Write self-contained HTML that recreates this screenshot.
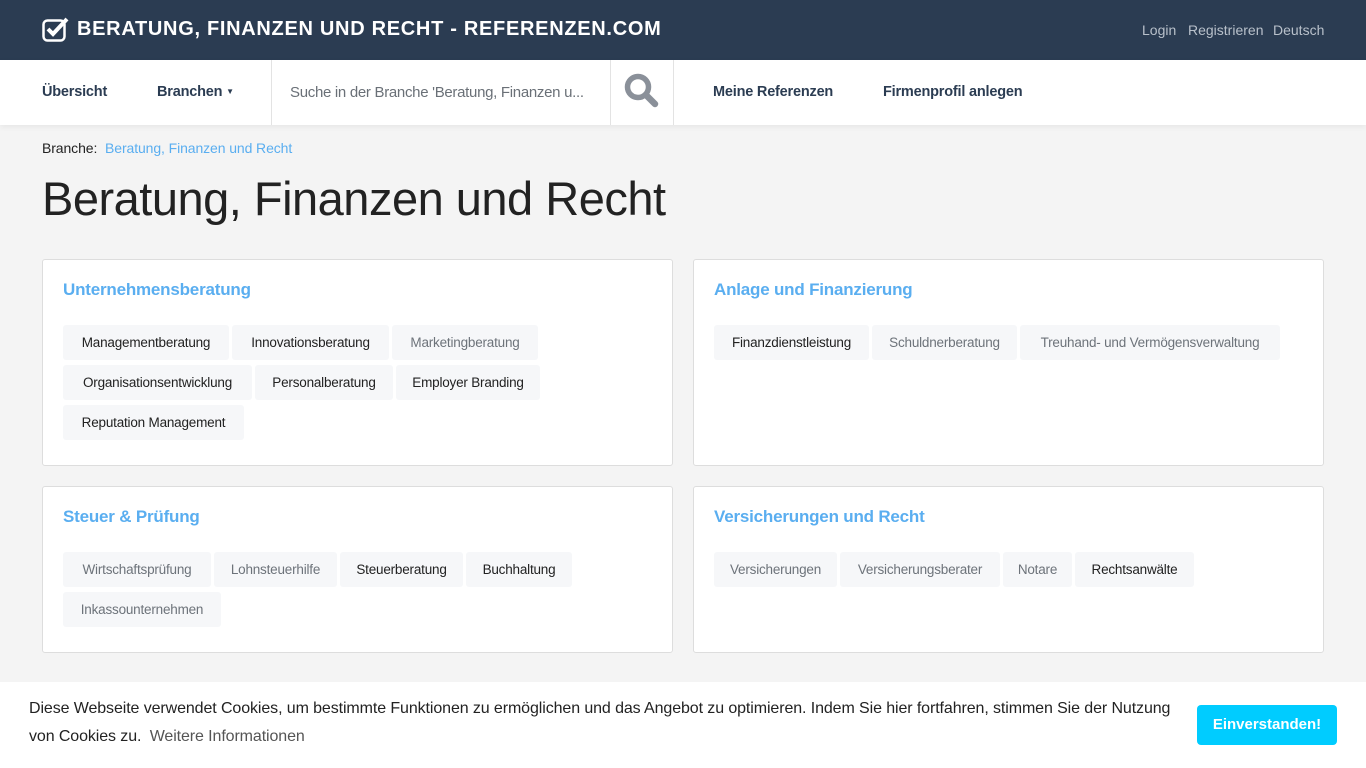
<!DOCTYPE html><html><head><meta charset="utf-8"><style>
*{box-sizing:border-box;margin:0;padding:0}
body{width:1366px;height:768px;overflow:hidden;background:#f4f4f4;font-family:"Liberation Sans",sans-serif;position:relative;color:#222}
.a{position:absolute}
.top{left:0;top:0;width:1366px;height:60px;background:#2b3c52}
.brand{left:77px;top:18px;color:#fff;font-weight:bold;font-size:20px;letter-spacing:0.7px;white-space:nowrap}
.tl{top:22px;font-size:14px;color:#b8c0ca}
.nav{left:0;top:60px;width:1366px;height:65px;background:#fff;box-shadow:0 2px 6px rgba(0,0,0,.06)}
.ni{top:84px;font-size:14.5px;font-weight:bold;color:#2b3c52;letter-spacing:-0.2px;white-space:nowrap}
.vl{top:60px;width:1px;height:65px;background:#e3e3e3}
.card{background:#fff;border:1px solid #ddd;border-radius:3px}
.ct{font-size:17px;font-weight:bold;color:#5aaef0;letter-spacing:-0.2px}
.tag{position:absolute;height:35px;line-height:35px;background:#f6f7f9;border-radius:3px;font-size:13.5px;color:#222;text-align:center;white-space:nowrap;overflow:hidden;letter-spacing:-0.2px}
.g{color:#6d737a}
</style></head><body>
<div class="a top"></div>
<svg class="a" style="left:42px;top:17px" width="28" height="25" viewBox="0 0 28 25"><rect x="1.5" y="3.5" width="21" height="20" rx="4" fill="none" stroke="#fff" stroke-width="2.5"/><path d="M6 12 L11 17 L25 2" fill="none" stroke="#fff" stroke-width="4"/></svg>
<div class="a brand">BERATUNG, FINANZEN UND RECHT - REFERENZEN.COM</div>
<div class="a tl" style="left:1142px">Login</div>
<div class="a tl" style="left:1188px">Registrieren</div>
<div class="a tl" style="left:1273px">Deutsch</div>
<div class="a nav"></div>
<div class="a ni" style="left:42px">Übersicht</div>
<div class="a ni" style="left:157px">Branchen <span style="font-size:8px;vertical-align:2px">▼</span></div>
<div class="a vl" style="left:271px"></div>
<div class="a" style="left:290px;top:84px;font-size:15px;color:#6a7077;letter-spacing:-0.3px;white-space:nowrap">Suche in der Branche 'Beratung, Finanzen u...</div>
<div class="a vl" style="left:610px"></div>
<svg class="a" style="left:624px;top:73px" width="36" height="36" viewBox="0 0 36 36"><circle cx="14" cy="14" r="10.5" fill="none" stroke="#8a9099" stroke-width="5.5"/><path d="M22 22 L31 31" stroke="#8a9099" stroke-width="6.5" stroke-linecap="round"/></svg>
<div class="a vl" style="left:673px"></div>
<div class="a ni" style="left:713px">Meine Referenzen</div>
<div class="a ni" style="left:883px">Firmenprofil anlegen</div>
<div class="a" style="left:42px;top:140px;font-size:14px;letter-spacing:-0.1px">Branche: <span style="color:#5aaef0;margin-left:4px">Beratung, Finanzen und Recht</span></div>
<div class="a" style="left:42px;top:171px;font-size:47px;color:#222;letter-spacing:-0.5px">Beratung, Finanzen und Recht</div>

<div class="a card" style="left:42px;top:259px;width:631px;height:207px"></div>
<div class="a ct" style="left:63px;top:280px">Unternehmensberatung</div>
<div class="tag" style="left:63px;top:325px;width:166px">Managementberatung</div>
<div class="tag" style="left:232px;top:325px;width:157px">Innovationsberatung</div>
<div class="tag g" style="left:392px;top:325px;width:146px">Marketingberatung</div>
<div class="tag" style="left:63px;top:365px;width:189px">Organisationsentwicklung</div>
<div class="tag" style="left:255px;top:365px;width:138px">Personalberatung</div>
<div class="tag" style="left:396px;top:365px;width:144px">Employer Branding</div>
<div class="tag" style="left:63px;top:405px;width:181px">Reputation Management</div>

<div class="a card" style="left:693px;top:259px;width:631px;height:207px"></div>
<div class="a ct" style="left:714px;top:280px">Anlage und Finanzierung</div>
<div class="tag" style="left:714px;top:325px;width:155px">Finanzdienstleistung</div>
<div class="tag g" style="left:872px;top:325px;width:145px">Schuldnerberatung</div>
<div class="tag g" style="left:1020px;top:325px;width:260px">Treuhand- und Vermögensverwaltung</div>

<div class="a card" style="left:42px;top:486px;width:631px;height:167px"></div>
<div class="a ct" style="left:63px;top:507px">Steuer &amp; Prüfung</div>
<div class="tag g" style="left:63px;top:552px;width:148px">Wirtschaftsprüfung</div>
<div class="tag g" style="left:214px;top:552px;width:123px">Lohnsteuerhilfe</div>
<div class="tag" style="left:340px;top:552px;width:123px">Steuerberatung</div>
<div class="tag" style="left:466px;top:552px;width:106px">Buchhaltung</div>
<div class="tag g" style="left:63px;top:592px;width:158px">Inkassounternehmen</div>

<div class="a card" style="left:693px;top:486px;width:631px;height:167px"></div>
<div class="a ct" style="left:714px;top:507px">Versicherungen und Recht</div>
<div class="tag g" style="left:714px;top:552px;width:123px">Versicherungen</div>
<div class="tag g" style="left:840px;top:552px;width:160px">Versicherungsberater</div>
<div class="tag g" style="left:1003px;top:552px;width:69px">Notare</div>
<div class="tag" style="left:1075px;top:552px;width:119px">Rechtsanwälte</div>

<div class="a" style="left:0;top:682px;width:1366px;height:86px;background:#fff"></div>
<div class="a" style="left:29px;top:695px;width:1160px;font-size:16px;line-height:28px;color:#222;letter-spacing:-0.1px">Diese Webseite verwendet Cookies, um bestimmte Funktionen zu ermöglichen und das Angebot zu optimieren. Indem Sie hier fortfahren, stimmen Sie der Nutzung von Cookies zu. <span style="color:#555;margin-left:4px">Weitere Informationen</span></div>
<div class="a" style="left:1197px;top:705px;width:140px;height:40px;background:#00ccff;border-radius:4px;color:#fff;font-weight:bold;font-size:15px;line-height:40px;text-align:center">Einverstanden!</div>
</body></html>
